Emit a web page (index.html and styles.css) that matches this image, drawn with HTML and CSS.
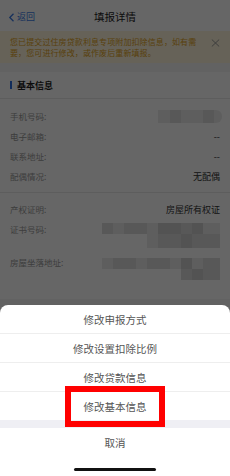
FILE: index.html
```html
<!DOCTYPE html>
<html lang="zh">
<head>
<meta charset="utf-8">
<title>填报详情</title>
<link rel="stylesheet" href="styles.css">
</head>
<body>
<div class="page">
  <div class="nav">
    <div class="back">
      <svg class="chev" width="7" height="9" viewBox="0 0 7 9"><path d="M5.5 0.8 L1.8 4.5 L5.5 8.2" fill="none" stroke="#3b7be6" stroke-width="1.3"/></svg>
      <span>返回</span>
    </div>
    <div class="title">填报详情</div>
  </div>
  <div class="notice">
    <p>您已提交过住房贷款利息专项附加扣除信息，如有需要，您可进行修改，或作废后重新填报。</p>
    <svg class="close" width="9" height="8" viewBox="0 0 9 8"><path d="M0.8 0.5 L8.2 7.5 M8.2 0.5 L0.8 7.5" stroke="#999" stroke-width="1"/></svg>
  </div>
  <div class="card">
    <div class="sec-head"><i class="bar"></i><span>基本信息</span></div>
    <div class="list first">
      <div class="row"><span class="label">手机号码:</span>
        <div class="mosaic phone"><i class="c1 w12"></i><i class="c2 w11"></i><i class="c1 w22"></i><i class="c2 w11"></i><i class="c1 w8 rr"></i></div>
      </div>
      <div class="row"><span class="label">电子邮箱:</span><span class="value">--</span></div>
      <div class="row"><span class="label">联系地址:</span><span class="value">--</span></div>
      <div class="row"><span class="label">配偶情况:</span><span class="value">无配偶</span></div>
    </div>
    <div class="list second">
      <div class="row"><span class="label">产权证明:</span><span class="value">房屋所有权证</span></div>
      <div class="row tall">
        <span class="label">证书号码:</span>
        <div class="mosaic block cert">
          <div class="mline"><i class="c2 w11"></i><i class="c1 w11"></i><i class="c2 w23"></i><i class="c1 w11"></i><i class="c3 w23"></i><i class="c2 w11"></i><i class="c3 w11"></i><i class="c1 w17"></i></div>
          <div class="mline h14"><i class="c0 w45"></i><i class="c1 w11"></i><i class="c2 w23"></i><i class="c3 w11"></i><i class="c2 w28"></i></div>
        </div>
      </div>
      <div class="row tall2">
        <span class="label">房屋坐落地址:</span>
        <div class="mosaic block addr">
          <div class="mline"><i class="c1 w11"></i><i class="c2 w23"></i><i class="c1 w11"></i><i class="c2 w23"></i><i class="c1 w11"></i><i class="c3 w11"></i><i class="c1 w11"></i><i class="c2 w17"></i></div>
          <div class="mline"><i class="c0 w79"></i><i class="c2 w11"></i><i class="c3 w11"></i><i class="c2 w17"></i></div>
        </div>
      </div>
    </div>
  </div>
</div>
<div class="mask"></div>
<div class="sheet">
  <div class="item">修改申报方式</div>
  <div class="item">修改设置扣除比例</div>
  <div class="item">修改贷款信息</div>
  <div class="item last">修改基本信息</div>
  <div class="gap"></div>
  <div class="cancel">取消</div>
  <div class="home"><i></i></div>
</div>
<div class="highlight"></div>
</body>
</html>
```
FILE: styles.css
```css
* { box-sizing: border-box; margin: 0; padding: 0; }
html, body {
  width: 230px;
  height: 476px;
  overflow: hidden;
}
body {
  position: relative;
  font-family: "Noto Sans CJK SC", "Noto Sans", sans-serif;
  background: #f4f4f6;
  color: #333;
}
.page { display: flex; flex-direction: column; }

.nav {
  height: 31px;
  background: #fff;
  display: flex;
  align-items: center;
  justify-content: center;
  position: relative;
}
.back {
  position: absolute;
  left: 8px;
  top: 10px;
  display: flex;
  align-items: center;
  gap: 2px;
  color: #3b7be6;
  font-size: 9px;
  line-height: 14px;
}
.title {
  font-size: 10.5px;
  line-height: 14px;
  color: #222;
  margin-top: 3px;
}

.notice {
  height: 32px;
  background: #fff6dc;
  padding: 6px 30px 0 10px;
  position: relative;
}
.notice p {
  font-size: 8px;
  line-height: 10.5px;
  letter-spacing: 0.1px;
  color: #e0a020;
}
.close { position: absolute; right: 10px; top: 8px; }

.card { margin-top: 9px; background: #fff; }
.sec-head {
  height: 27px;
  display: flex;
  align-items: center;
  padding-left: 10px;
  border-bottom: 1px solid #e8e8e8;
}
.bar {
  display: block;
  width: 2px;
  height: 8px;
  background: #2f6fe0;
  margin-right: 5px;
}
.sec-head span { font-size: 9px; font-weight: 700; color: #222; }

.list { padding: 0 10px 0 10px; }
.list.first { padding-top: 7px; padding-bottom: 6px; border-bottom: 1px solid #e8e8e8; }
.list.second { padding-top: 6px; padding-bottom: 14px; }
.row {
  height: 20px;
  display: flex;
  justify-content: space-between;
  align-items: center;
}
.row.tall { height: 33px; align-items: flex-start; }
.row.tall2 { height: 33px; align-items: flex-start; }
.row.tall .label, .row.tall2 .label { line-height: 20px; }
.label { font-size: 8.5px; color: #999; }
.value { font-size: 9px; color: #333; }

.mosaic { display: flex; }
.mosaic i { display: block; height: 100%; }
.phone { height: 13px; margin-right: -2px; margin-top: 1px; }
.block { flex-direction: column; width: 118px; margin-right: 0; }
.cert { margin-top: 4px; }
.addr { margin-top: 6px; }
.mline { display: flex; height: 11px; }
.mline.h14 { height: 14px; }
.c0 { background: #fff; }
.c1 { background: #ececec; }
.c2 { background: #dcdcdc; }
.c3 { background: #d0d0d0; }
.rr { border-radius: 0 6px 6px 0; }
.w8 { width: 8px; } .w11 { width: 11px; } .w12 { width: 12px; }
.w17 { width: 17px; } .w22 { width: 22px; } .w23 { width: 23px; }
.w28 { width: 28px; } .w45 { width: 45px; } .w79 { width: 79px; }

.mask {
  position: absolute;
  inset: 0;
  background: rgba(0, 0, 0, 0.6);
}

.sheet {
  position: absolute;
  left: 0;
  right: 0;
  top: 305px;
  bottom: 0;
  background: #fff;
  border-radius: 8px 8px 0 0;
  display: flex;
  flex-direction: column;
}
.item {
  height: 29px;
  border-bottom: 1px solid #eeeeee;
  display: flex;
  align-items: center;
  justify-content: center;
  font-size: 10.5px;
  color: #555;
}
.item.last { height: 28px; border-bottom: none; }
.gap { height: 8px; background: #efeff4; }
.cancel {
  height: 28px;
  display: flex;
  align-items: center;
  justify-content: center;
  font-size: 10.5px;
  color: #555;
}
.home { flex: 1; display: flex; justify-content: center; padding-top: 12px; }
.home i { display: block; width: 82px; height: 3px; border-radius: 2px; background: #111; }

.highlight {
  position: absolute;
  left: 65px;
  top: 386px;
  width: 100px;
  height: 41px;
  border: 6px solid #ff0000;
}
```
